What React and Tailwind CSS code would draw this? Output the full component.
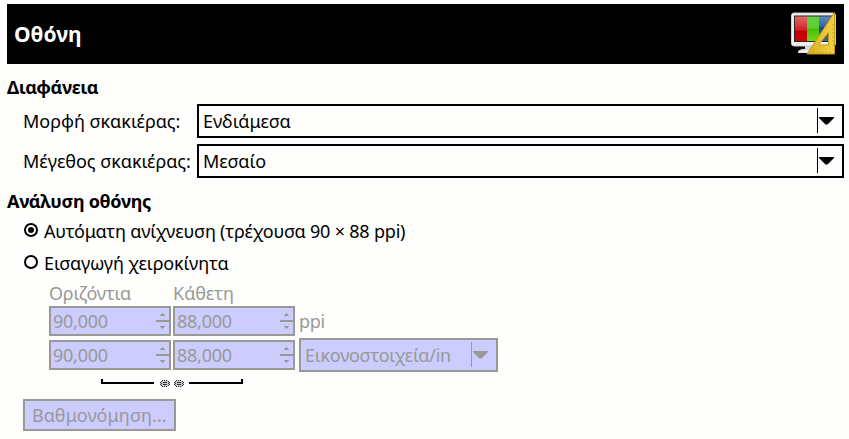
import React from "react";

function ComboBox({ label, className, color = "text-black", spacing }) {
  return (
    <div className={`flex h-[34px] items-center border-2 border-current pl-1 ${color} ${className}`}>
      <span className={`grow whitespace-nowrap leading-[28px] ${spacing}`}>{label}</span>
      <span className="h-[25px] w-px bg-current mb-[1px]" />
      <svg className="ml-[1px] mr-2 h-2 w-[15px]" viewBox="0 0 15 8">
        <path d="M0 0h15v1L8.5 7.5h-2L0 1z" fill="currentColor" />
      </svg>
    </div>
  );
}

function SpinBox({ value }) {
  return (
    <div className="flex h-[30px] w-[122px] items-center justify-between border-2 border-current bg-[#ccccff] pl-0.5">
      <span className="leading-[26px] tracking-[-0.25px]">{value}</span>
      <svg className="h-[26px] w-[13px]" viewBox="0 0 13 26" shapeRendering="crispEdges">
        <path d="M0 12h13v2H0zM4 7h5v1H4zM5 6h3v1H5zM6 5h1v1H6zM4 18h5v1H4zM5 19h3v1H5zM6 20h1v1H6z" fill="currentColor" />
      </svg>
    </div>
  );
}

function Radio({ label, checked, className, spacing }) {
  return (
    <div className={`flex h-8 items-center ${className}`}>
      <span className="mr-[6px] flex size-[14px] items-center justify-center rounded-full border-2 border-black bg-white">
        {checked && <span className="size-[6px] rounded-full bg-black" />}
      </span>
      <span className={`whitespace-nowrap pt-0.5 ${spacing}`}>{label}</span>
    </div>
  );
}

function DisplayIcon() {
  return (
    <svg className="h-[46px] w-[48px]" viewBox="0 0 48 46">
      <defs>
        <linearGradient id="red" x2="0" y2="1">
          <stop stopColor="#df6b66" /><stop offset=".55" stopColor="#d02424" /><stop offset=".6" stopColor="#c00000" /><stop offset="1" stopColor="#d40000" />
        </linearGradient>
        <linearGradient id="green" x2="0" y2="1">
          <stop stopColor="#65ce45" /><stop offset=".48" stopColor="#5bd02e" /><stop offset=".5" stopColor="#43bd0b" /><stop offset="1" stopColor="#72d716" />
        </linearGradient>
        <linearGradient id="blue" x2="0" y2="1">
          <stop stopColor="#628bc5" /><stop offset=".4" stopColor="#3465a4" /><stop offset=".45" stopColor="#204a87" /><stop offset="1" stopColor="#3465a4" />
        </linearGradient>
        <linearGradient id="gold" x2="1" y2="0">
          <stop stopColor="#d8ae1c" /><stop offset="1" stopColor="#f0d245" />
        </linearGradient>
      </defs>
      <path d="M15 35h18v4h3v3H8q0-3 4-4h3z" fill="#d7d7d4" />
      <path d="M9 39.500h20v2H8z" fill="#f5f5f3" />
      <rect x="1.5" y="2" width="44" height="33" rx="2.5" fill="#eeeeec" stroke="#d0d0cc" />
      <path d="M4 4.500h40v26.500H4z" fill="#302525" />
      <path d="M5 5.500h12v24.500H5z" fill="url(#red)" />
      <path d="M17 5.500h12v24.500H17z" fill="url(#green)" />
      <path d="M29 5.500h14v24.500H29z" fill="url(#blue)" />
      <path fillRule="evenodd" d="M44.500 1.500v41.500H17zM38.500 21.500L28.500 34h10z" fill="url(#gold)" stroke="#c49a0d" strokeLinejoin="round" />
      <path d="M42 14h2M42 18h2M42 22h2M42 26h2M42 30h2M42 34h2M24 40.500v2M28 40.500v2M32 40.500v2M36 40.500v2M40 40.500v2" stroke="#c9a01b" strokeWidth=".7" />
    </svg>
  );
}

function ChainLink() {
  return (
    <svg className="h-[7px] w-[10px]" viewBox="0 0 10 7" shapeRendering="crispEdges">
      <path d="M2 0h6v1H2zM1 1h8v1H1zM0 2h10v3H0zM1 5h8v1H1zM2 6h6v1H2z" fill="#c8c8c6" />
      <path d="M2 0h1v1H2zM4 0h1v1H4zM6 0h1v1H6zM1 1h1v1H1zM8 1h1v1H8zM0 2h1v1H0zM3 2h4v1H3zM9 2h1v1H9zM1 3h1v1H1zM8 3h1v1H8zM0 4h1v1H0zM3 4h4v1H3zM9 4h1v1H9zM1 5h1v1H1zM8 5h1v1H8zM2 6h1v1H2zM4 6h1v1H4zM6 6h1v1H6z" fill="#333" />
    </svg>
  );
}

export default function App() {
  return (
    <main className="h-[439px] w-[849px] overflow-hidden bg-[#fefefc] pl-[7px] pr-[5px] pt-1 font-['Noto_Sans','Open_Sans',sans-serif] text-[18px] leading-6 text-black">
      <header className="flex h-[60px] items-center justify-between bg-black pl-[7px] pr-[6px] text-white">
        <h1 className="text-[21px] font-bold tracking-[0px]">Οθόνη</h1>
        <DisplayIcon />
      </header>

      <h2 className="mt-[11px] h-6 whitespace-nowrap font-bold tracking-[-0.4px]">Διαφάνεια</h2>
      <div className="mt-[5px] flex items-center pl-4">
        <span className="w-[174px] whitespace-nowrap tracking-[-0.03px]">Μορφή σκακιέρας:</span>
        <ComboBox label="Ενδιάμεσα" className="grow" spacing="tracking-[0px]" />
      </div>
      <div className="mt-[6px] flex items-center pl-4">
        <span className="w-[174px] whitespace-nowrap tracking-[-0.05px]">Μέγεθος σκακιέρας:</span>
        <ComboBox label="Μεσαίο" className="grow" spacing="tracking-[0px]" />
      </div>

      <h2 className="mt-[11px] h-6 whitespace-nowrap font-bold tracking-[-0.3px]">Ανάλυση οθόνης</h2>
      <Radio label="Αυτόματη ανίχνευση (τρέχουσα 90 × 88 ppi)" checked className="ml-[17px] mt-px" spacing="tracking-[-0.2px]" />
      <Radio label="Εισαγωγή χειροκίνητα" className="ml-[17px]" spacing="tracking-[-0.13px]" />

      <section className="ml-[42px] text-[#999996]">
        <div className="mt-[3px] flex h-[25px] gap-0.5 whitespace-nowrap">
          <span className="w-[122px] tracking-[-0.2px]">Οριζόντια</span>
          <span className="w-[122px] tracking-[0px]">Κάθετη</span>
        </div>
        <div className="flex h-[30px] items-center gap-0.5">
          <SpinBox value="90,000" />
          <SpinBox value="88,000" />
          <span className="ml-0.5 tracking-[-0.3px]">ppi</span>
        </div>
        <div className="mt-0.5 flex h-[34px] items-center gap-0.5">
          <SpinBox value="90,000" />
          <SpinBox value="88,000" />
          <ComboBox label="Εικονοστοιχεία/in" className="ml-0.5 w-[199px] bg-[#ccccff]" color="text-[#999996]" spacing="tracking-[-0.25px]" />
        </div>
      </section>
      <div className="ml-[94px] mt-[7px] flex h-[9px] items-start">
        <span className="h-[5px] w-[53px] border-b-2 border-l-2 border-black" />
        <span className="ml-[6px] mr-[5px] mt-px flex gap-1"><ChainLink /><ChainLink /></span>
        <span className="h-[5px] w-[54px] border-b-2 border-r-2 border-black" />
      </div>
      <button className="ml-4 mt-[11px] block h-8 w-[153px] whitespace-nowrap border-2 border-[#999996] bg-[#ccccff] pl-[7px] text-left leading-7 text-[#999996] tracking-[0.07px]">
        Βαθμονόμηση...
      </button>
    </main>
  );
}
